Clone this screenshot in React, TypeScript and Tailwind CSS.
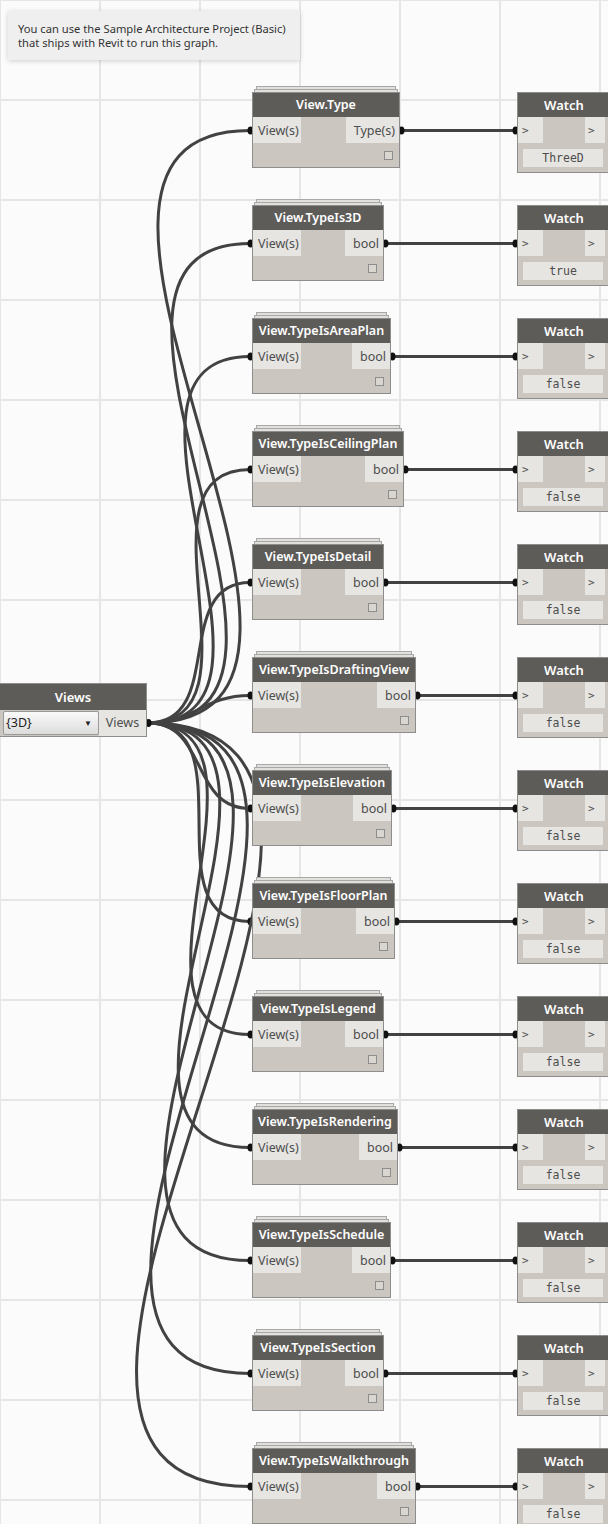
import React from "react";

type N = { title: string; out: string; w: number; outW: number; val: string };

const nodes: N[] = [
  { title: "View.Type", out: "Type(s)", w: 148, outW: 53, val: "ThreeD" },
  { title: "View.TypeIs3D", out: "bool", w: 132, outW: 38, val: "true" },
  { title: "View.TypeIsAreaPlan", out: "bool", w: 139, outW: 38, val: "false" },
  { title: "View.TypeIsCeilingPlan", out: "bool", w: 152, outW: 38, val: "false" },
  { title: "View.TypeIsDetail", out: "bool", w: 132, outW: 38, val: "false" },
  { title: "View.TypeIsDraftingView", out: "bool", w: 164, outW: 38, val: "false" },
  { title: "View.TypeIsElevation", out: "bool", w: 140, outW: 38, val: "false" },
  { title: "View.TypeIsFloorPlan", out: "bool", w: 143, outW: 38, val: "false" },
  { title: "View.TypeIsLegend", out: "bool", w: 132, outW: 38, val: "false" },
  { title: "View.TypeIsRendering", out: "bool", w: 146, outW: 38, val: "false" },
  { title: "View.TypeIsSchedule", out: "bool", w: 139, outW: 38, val: "false" },
  { title: "View.TypeIsSection", out: "bool", w: 132, outW: 38, val: "false" },
  { title: "View.TypeIsWalkthrough", out: "bool", w: 164, outW: 38, val: "false" },
];

const ROW = 113;
const TOP0 = 92;
const NODE_X = 252;
const WATCH_X = 517;
const SRC = { x: 148, y: 723 };

function wirePath(x1: number, y1: number, x2: number, y2: number) {
  const d = Math.sqrt((x2 - x1) ** 2 + (y2 - y1) ** 2) * 0.45;
  return `M ${x1} ${y1} C ${x1 + d} ${y1}, ${x2 - d} ${y2}, ${x2} ${y2}`;
}

function Canvas() {
  const vs = [0, 100, 200, 300, 400, 500, 600];
  const hs = Array.from({ length: 16 }, (_, i) => i * 100);
  return (
    <svg className="absolute inset-0" width={608} height={1524}>
      {vs.map((x) => (
        <rect key={"v" + x} x={x - 1} y={0} width={2} height={1524} fill="#e6e6e6" />
      ))}
      {hs.map((y) => (
        <rect key={"h" + y} x={0} y={y - 1} width={608} height={2} fill="#e6e6e6" />
      ))}
      {nodes.map((n, i) => {
        const py = TOP0 + i * ROW + 38.5;
        return (
          <g key={n.title}>
            <path d={wirePath(SRC.x, SRC.y, NODE_X - 2, py)} stroke="#424242" strokeWidth={3} fill="none" />
            <line x1={NODE_X + n.w} y1={py} x2={WATCH_X} y2={py} stroke="#424242" strokeWidth={3} />
            <ellipse cx={NODE_X - 1.5} cy={py} rx={3} ry={4} fill="#111" />
            <ellipse cx={NODE_X + n.w + 1.5} cy={py} rx={3} ry={4} fill="#111" />
            <ellipse cx={WATCH_X - 1.5} cy={py} rx={3} ry={4} fill="#111" />
          </g>
        );
      })}
      <ellipse cx={148.5} cy={723} rx={3} ry={4} fill="#111" />
    </svg>
  );
}

function FuncNode({ n, top }: { n: N; top: number }) {
  return (
    <div className="absolute" style={{ left: NODE_X, top, width: n.w }}>
      <div className="absolute left-[4px] right-[4px] top-[-6px] h-[4px] border border-[#a8a8a8] bg-[#e2e0dc]" />
      <div className="absolute left-[2px] right-[2px] top-[-3px] h-[4px] border border-[#a8a8a8] bg-[#e2e0dc]" />
      <div className="relative flex h-[76px] flex-col border border-[#8d8d8d] bg-[#cbc6bf]">
        <div className="flex h-[24px] items-center justify-center whitespace-nowrap bg-[#5e5c59] pt-[1px] text-[12.5px] font-semibold text-white">
          {n.title}
        </div>
        <div className="flex h-[26px] justify-between">
          <div className="flex w-[48px] items-center bg-[#e6e5e2] pl-[5px] pt-[2px] text-[12.5px] text-[#4d4d4d]">View(s)</div>
          <div
            className="flex items-center justify-end bg-[#e6e5e2] pr-[4px] pt-[2px] text-[12.5px] text-[#4d4d4d]"
            style={{ width: n.outW }}
          >
            {n.out}
          </div>
        </div>
        <div className="flex flex-1 items-end justify-end pb-[7px] pr-[6px]">
          <div className="h-[9px] w-[9px] border border-[#8d8d8d] bg-[#d9d6d0]" />
        </div>
      </div>
    </div>
  );
}

function WatchNode({ n, top }: { n: N; top: number }) {
  return (
    <div className="absolute" style={{ left: WATCH_X, top, width: 94 }}>
      <div className="flex h-[81px] flex-col border border-[#8d8d8d] bg-[#cbc6bf]">
        <div className="flex h-[24px] items-center justify-center bg-[#5e5c59] pt-[1px] text-[13px] font-semibold text-white">
          Watch
        </div>
        <div className="flex h-[26px] justify-between">
          <div className="flex w-[25px] items-center bg-[#e6e5e2] pl-[4px] pt-[2px] font-['DejaVu_Sans_Mono',monospace] text-[11px] text-[#4d4d4d]">&gt;</div>
          <div className="mr-[5px] flex w-[20px] items-center bg-[#e6e5e2] pl-[3px] pt-[2px] font-['DejaVu_Sans_Mono',monospace] text-[11px] text-[#4d4d4d]">&gt;</div>
        </div>
        <div className="px-[5px] pt-[6px]">
          <div className="flex h-[18px] w-[80px] items-center justify-center bg-[#e6e5e2] pt-[1px] font-['DejaVu_Sans_Mono',monospace] text-[11.5px] text-[#4d4d4d]">
            {n.val}
          </div>
        </div>
      </div>
    </div>
  );
}

export default function App() {
  return (
    <div className="relative h-[1524px] w-[608px] overflow-hidden bg-[#fbfbfb] font-['Noto_Sans',sans-serif]">
      <Canvas />
      <div className="absolute left-[8px] top-[11px] h-[49px] w-[292px] bg-[#efefef] pl-[10px] pt-[11px] text-[11.2px] leading-[14px] text-[#333] shadow-[0_1px_5px_rgba(0,0,0,0.18)]">
        <div>You can use the Sample Architecture Project (Basic)</div>
        <div>that ships with Revit to run this graph.</div>
      </div>

      <div className="absolute left-[-1px] top-[683px] w-[148px] border border-[#8d8d8d] bg-[#cbc6bf]">
        <div className="flex h-[26px] items-center justify-center bg-[#5e5c59] pt-[1px] text-[13px] font-semibold text-white">Views</div>
        <div className="flex h-[26px]">
          <div className="my-[1px] ml-[3px] flex w-[96px] items-center justify-between rounded-[2px] border border-[#9a9a9a] bg-[linear-gradient(#fafafa,#dcdcdc)] px-[2px] text-[12.5px] text-[#222]">
            <span>{"{3D}"}</span>
            <span className="mr-[4px] text-[8px] leading-none">▼</span>
          </div>
          <div className="flex flex-1 items-center justify-center bg-[#e6e5e2] pt-[1px] text-[12.5px] text-[#4d4d4d]">Views</div>
        </div>
      </div>

      {nodes.map((n, i) => (
        <React.Fragment key={n.title}>
          <FuncNode n={n} top={TOP0 + i * ROW} />
          <WatchNode n={n} top={TOP0 + i * ROW} />
        </React.Fragment>
      ))}
    </div>
  );
}
